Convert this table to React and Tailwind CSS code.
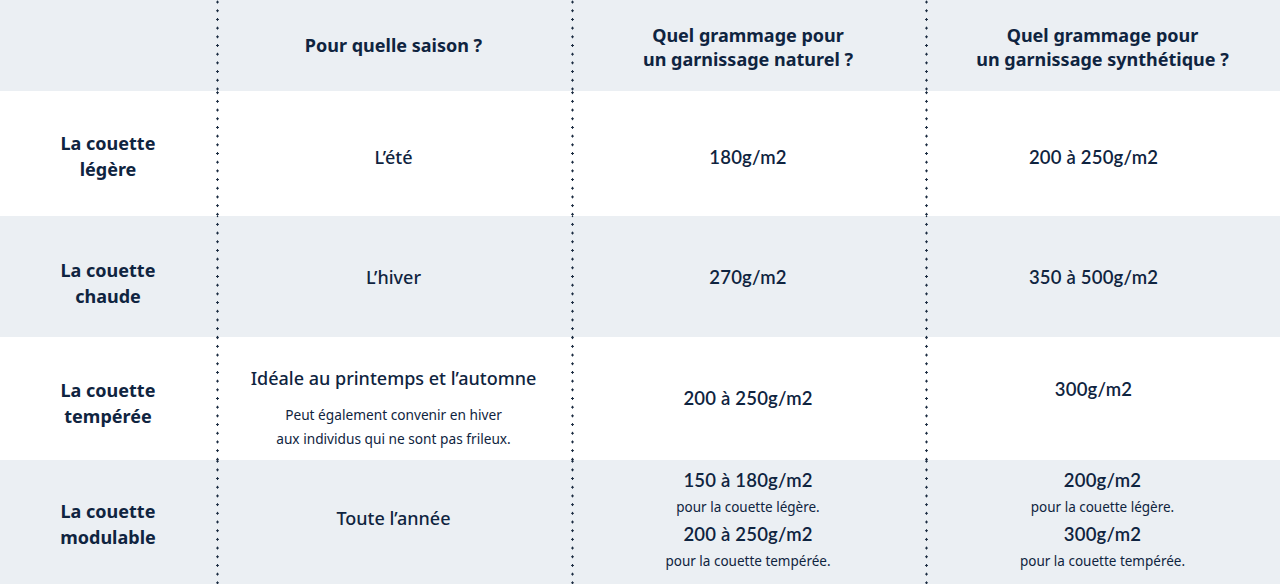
import React from "react";

const navy = "text-[#0f2440]";

// dotted separator drawn as the cell's left-edge background
const dotted =
  "bg-[radial-gradient(circle_at_1.5px_center,#1a2b40_1px,transparent_1.4px)] bg-[length:3px_8.7px] bg-repeat-y bg-left";

const Cell = ({ children, first, className = "" }) => (
  <div
    className={`flex flex-col items-center justify-center text-center ${first ? "" : dotted} ${className}`}
  >
    {children}
  </div>
);

const RowLabel = ({ a, b, className }) => (
  <Cell first className={className}>
    <p className="font-bold text-[18px] leading-[26px]">{a}</p>
    <p className="font-bold text-[18px] leading-[26px]">{b}</p>
  </Cell>
);

const Num = ({ children }) => (
  <p className="font-['Lato',sans-serif] font-semibold text-[18.5px] leading-[27px] tracking-[0.2px]">{children}</p>
);

const Small = ({ children }) => <p className="text-[13.5px] leading-[27px]">{children}</p>;

const App = () => {
  return (
    <div className={`w-[1280px] h-[584px] bg-white ${navy} font-['Noto_Sans',sans-serif] overflow-hidden`}>
      {/* header */}
      <div className="grid grid-cols-[216px_355px_354px_355px] h-[91px] bg-[#ebeff3]">
        <Cell first />
        <Cell>
          <p className="font-bold text-[18px]">Pour quelle saison ?</p>
        </Cell>
        <Cell className="pt-[2px]">
          <p className="font-bold text-[18px] leading-[24px]">Quel grammage pour</p>
          <p className="font-bold text-[18px] leading-[24px]">un garnissage naturel ?</p>
        </Cell>
        <Cell className="pt-[2px]">
          <p className="font-bold text-[18px] leading-[24px]">Quel grammage pour</p>
          <p className="font-bold text-[18px] leading-[24px]">un garnissage synthétique ?</p>
        </Cell>
      </div>

      {/* légère */}
      <div className="grid grid-cols-[216px_355px_354px_355px] h-[125px] bg-white">
        <RowLabel a="La couette" b="légère" className="pt-[4px]" />
        <Cell className="pt-[8px]">
          <p className="font-medium text-[18px]">L’été</p>
        </Cell>
        <Cell className="pt-[8px]">
          <Num>180g/m2</Num>
        </Cell>
        <Cell className="pt-[8px] pr-[18px]">
          <Num>200 à 250g/m2</Num>
        </Cell>
      </div>

      {/* chaude */}
      <div className="grid grid-cols-[216px_355px_354px_355px] h-[121px] bg-[#ebeff3]">
        <RowLabel a="La couette" b="chaude" className="pt-[12px]" />
        <Cell className="pt-[2px]">
          <p className="font-medium text-[18px]">L’hiver</p>
        </Cell>
        <Cell className="pt-[2px]">
          <Num>270g/m2</Num>
        </Cell>
        <Cell className="pt-[2px] pr-[18px]">
          <Num>350 à 500g/m2</Num>
        </Cell>
      </div>

      {/* tempérée */}
      <div className="grid grid-cols-[216px_355px_354px_355px] h-[123px] bg-white">
        <RowLabel a="La couette" b="tempérée" className="pt-[8px]" />
        <Cell className="pt-[19px]">
          <p className="font-medium text-[18px] leading-[26px] mb-[12px]">Idéale au printemps et l’automne</p>
          <p className="text-[13.7px] leading-[24px]">Peut également convenir en hiver</p>
          <p className="text-[13.7px] leading-[24px]">aux individus qui ne sont pas frileux.</p>
        </Cell>
        <Cell>
          <Num>200 à 250g/m2</Num>
        </Cell>
        <Cell className="pb-[18px] pr-[18px]">
          <Num>300g/m2</Num>
        </Cell>
      </div>

      {/* modulable */}
      <div className="grid grid-cols-[216px_355px_354px_355px] h-[124px] bg-[#ebeff3]">
        <RowLabel a="La couette" b="modulable" className="pt-[4px]" />
        <Cell className="pb-[8px]">
          <p className="font-medium text-[18px]">Toute l’année</p>
        </Cell>
        <Cell className="pb-[2px]">
          <Num>150 à 180g/m2</Num>
          <Small>pour la couette légère.</Small>
          <Num>200 à 250g/m2</Num>
          <Small>pour la couette tempérée.</Small>
        </Cell>
        <Cell className="pb-[2px]">
          <Num>200g/m2</Num>
          <Small>pour la couette légère.</Small>
          <Num>300g/m2</Num>
          <Small>pour la couette tempérée.</Small>
        </Cell>
      </div>
    </div>
  );
};

export default App;
